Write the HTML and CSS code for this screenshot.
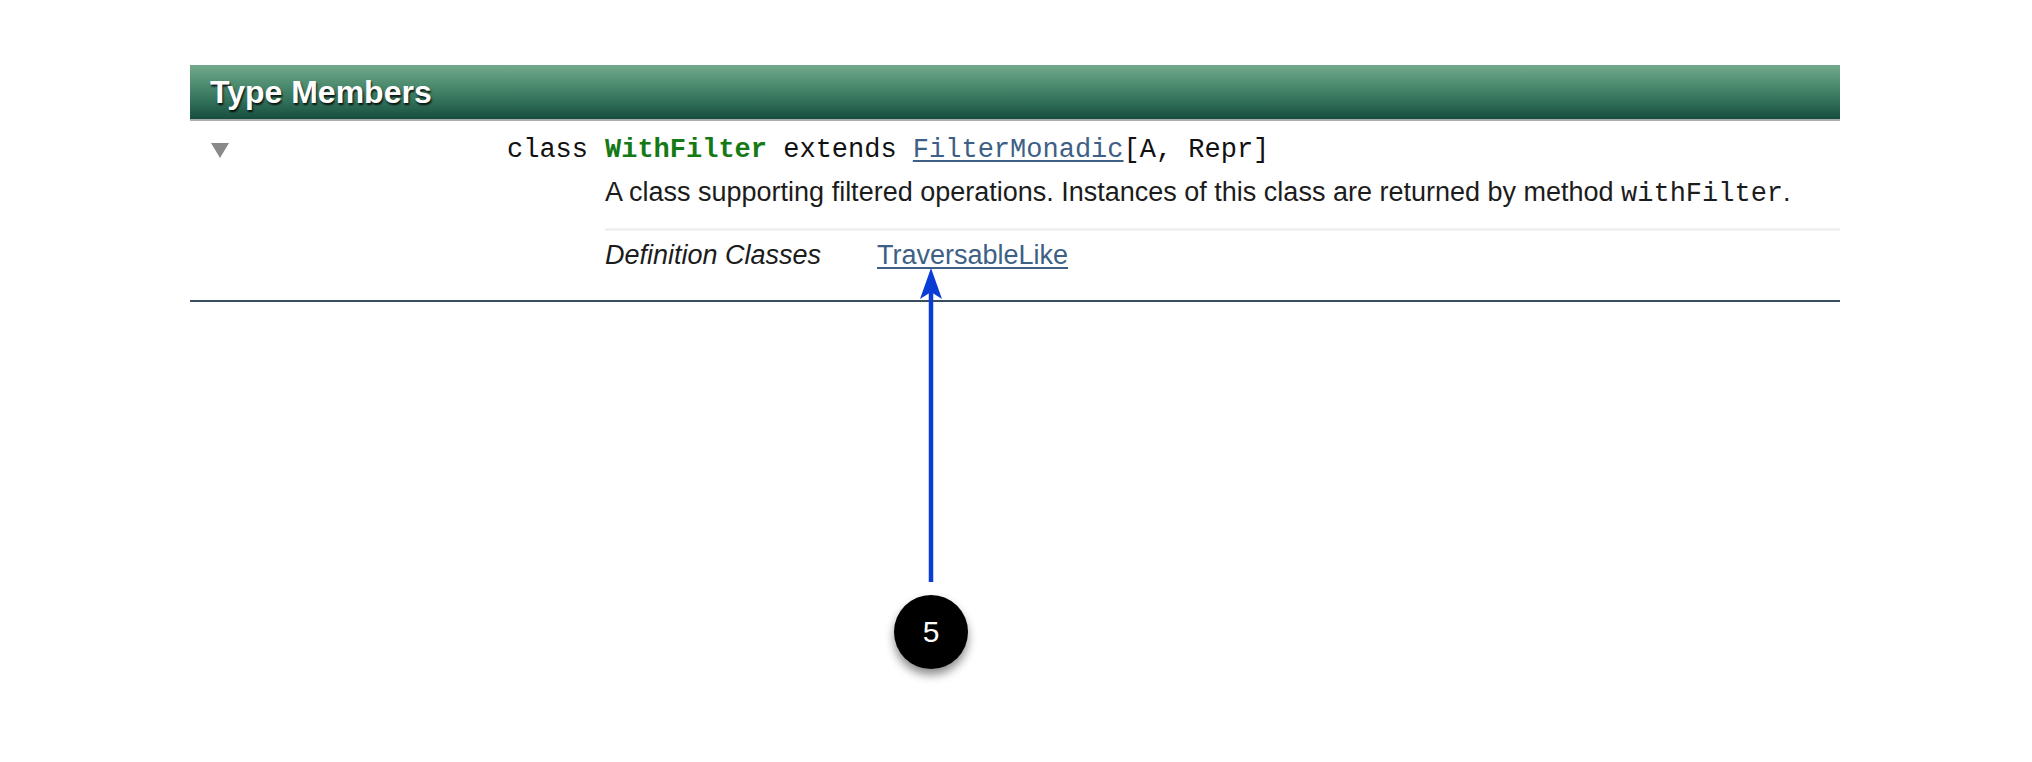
FILE: index.html
```html
<!DOCTYPE html>
<html>
<head>
<meta charset="utf-8">
<link rel="stylesheet" href="styles.css">
</head>
<body>
<div class="page">
  <section class="members">
    <h3 class="section-title">Type Members</h3>
    <div class="member">
      <div class="kind-cell">
        <span class="toggle"></span>
        <span class="kind">class</span>
      </div>
      <div class="member-body">
        <div class="signature"><span class="name">WithFilter</span> extends <a class="link" href="#">FilterMonadic</a>[A, Repr]</div>
        <p class="comment">A class supporting filtered operations. Instances of this class are returned by method <code>withFilter</code>.</p>
        <dl class="attributes">
          <dt>Definition Classes</dt>
          <dd><a class="link" href="#">TraversableLike</a></dd>
        </dl>
      </div>
    </div>
  </section>
  <div class="annotation">
    <svg class="arrow" width="40" height="320" viewBox="0 0 40 320">
      <line x1="20" y1="20" x2="20" y2="316" stroke="#0a3cd6" stroke-width="4.5"/>
      <path d="M20 2 L31 33 L20 26 L9 33 Z" fill="#0a3cd6"/>
    </svg>
    <div class="badge">5</div>
  </div>
</div>
</body>
</html>
```
FILE: styles.css
```css
html, body {
  margin: 0;
  padding: 0;
  background: #ffffff;
}

.page {
  position: relative;
  width: 2032px;
  height: 762px;
  padding-top: 65px;
  box-sizing: border-box;
}

.members {
  margin-left: 190px;
  width: 1650px;
}

.section-title {
  margin: 0;
  height: 54px;
  line-height: 54px;
  padding-left: 20px;
  font-family: "Liberation Sans", Arial, sans-serif;
  font-size: 32px;
  font-weight: bold;
  color: #ffffff;
  text-shadow: 1px 2px 2px rgba(0, 0, 0, 0.85);
  background: linear-gradient(to bottom, #72aa8b 0%, #4f8d70 35%, #2f6e57 70%, #174c3e 100%);
  border-bottom: 2px solid #a9adab;
}

.member {
  display: grid;
  grid-template-columns: 415px 1fr;
  padding-top: 11px;
  padding-bottom: 27px;
  border-bottom: 2px solid #3a4e62;
}

.kind-cell {
  display: flex;
  align-items: center;
  height: 36px;
}

.toggle {
  width: 0;
  height: 0;
  margin-left: 21px;
  border-left: 9px solid transparent;
  border-right: 9px solid transparent;
  border-top: 15px solid #8a8a8a;
}

.kind {
  margin-left: auto;
  padding-right: 17px;
  font-family: "Liberation Mono", "Courier New", monospace;
  font-size: 27px;
  line-height: 36px;
  color: #111111;
}

.signature {
  font-family: "Liberation Mono", "Courier New", monospace;
  font-size: 27px;
  line-height: 36px;
  color: #111111;
  white-space: nowrap;
}

.name {
  font-weight: bold;
  color: #157a15;
}

.link {
  color: #3e5f86;
  text-decoration: underline;
  text-underline-offset: 3px;
}

.comment {
  margin: 6px 0 0 0;
  font-family: "Liberation Sans", Arial, sans-serif;
  font-size: 27px;
  line-height: 36px;
  color: #1c1c1c;
  padding-bottom: 16px;
  border-bottom: 3px solid #f1f1f1;
}

.comment code {
  font-family: "Liberation Mono", "Courier New", monospace;
  font-size: 27px;
  color: #1c1c1c;
}

.attributes {
  display: flex;
  margin: 6px 0 0 0;
  font-family: "Liberation Sans", Arial, sans-serif;
  font-size: 27px;
  line-height: 36px;
  color: #1c1c1c;
}

.attributes dt {
  width: 272px;
  font-style: italic;
}

.attributes dd {
  margin: 0;
}

.annotation {
  position: absolute;
  left: 893px;
  top: 266px;
  width: 76px;
  display: flex;
  flex-direction: column;
  align-items: center;
}

.arrow {
  display: block;
}

.badge {
  width: 74px;
  height: 74px;
  margin-top: 9px;
  border-radius: 50%;
  background: #000000;
  color: #ffffff;
  font-family: "Liberation Sans", Arial, sans-serif;
  font-size: 30px;
  font-weight: 500;
  line-height: 74px;
  text-align: center;
  box-shadow: 0 6px 10px rgba(0, 0, 0, 0.45);
}
```
